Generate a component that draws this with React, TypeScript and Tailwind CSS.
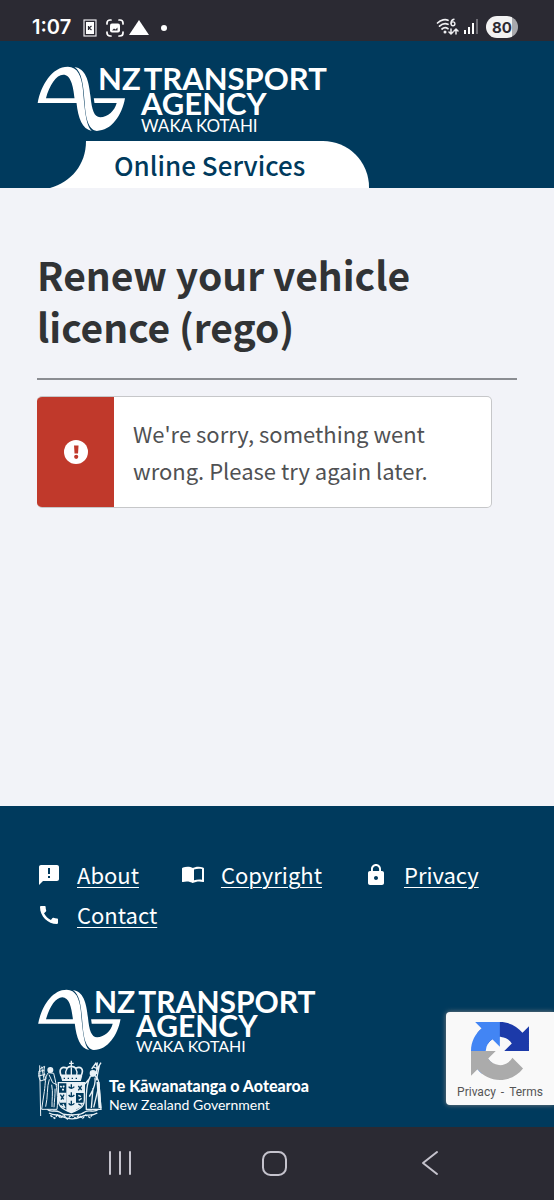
import type { ReactNode } from "react";
import { MdAnnouncement, MdCall, MdLock } from "react-icons/md";

const sans = "font-['Noto_Sans_CJK_SC','Noto_Sans',sans-serif]";

function StatusBar() {
  return (
    <div className="flex items-end justify-between bg-[#2b2a33] pt-4 pr-9 pb-[3px] pl-8 text-white">
      <div className="flex items-center">
        <span className="w-[51px] font-['Inter',sans-serif] text-[20px] leading-[21px] font-semibold">1:07</span>
        <svg className="mr-2 h-[18px] w-[14px]" viewBox="0 0 14 18" aria-hidden="true">
          <rect x="1" y="1" width="12" height="16" fill="none" stroke="#e8e8ec" strokeWidth="1.2" />
          <rect x="3" y="3" width="8" height="12" fill="#fff" />
          <path d="M5.500 7v4M8.500 7L6 9l2.500 2" fill="none" stroke="#2b2a33" strokeWidth="1.2" />
        </svg>
        <svg className="mr-1 h-[18px] w-5" viewBox="0 0 20 18" fill="none" stroke="#fff" strokeWidth="1.7" strokeLinecap="round" aria-hidden="true">
          <path d="M2 5V4a3 3 0 013-3h1M14 1h1a3 3 0 013 3v1M18 13v1a3 3 0 01-3 3h-1M6 17H5a3 3 0 01-3-3v-1" />
          <rect x="5" y="4.500" width="10" height="9" rx="2" fill="#fff" stroke="none" />
          <path d="M7 11.500l2-2 1.500 1 2-2v3z" fill="#2b2a33" stroke="none" />
        </svg>
        <svg className="mr-3 h-[15px] w-5" viewBox="0 0 20 15" fill="#fff" aria-hidden="true"><path d="M10 0l10 15H0z" /></svg>
        <span className="size-[6px] rounded-full bg-white" />
      </div>
      <div className="flex items-center">
        <svg className="mr-1 h-[18px] w-[23px]" viewBox="0 0 23 18" fill="none" stroke="#f0f0f3" strokeWidth="1.7" strokeLinecap="round" aria-hidden="true">
          <path d="M1.500 5C5 1.600 9.500 1 12 2.300M3.500 8.200C6.500 5.400 9.500 5 12 6.300M6 11c2-1.800 4-1.800 6-.3" />
          <circle cx="9" cy="14" r="1.500" fill="#f0f0f3" stroke="none" />
          <path d="M18 1.200c-2 .5-3 2-3 4" strokeWidth="1.400" />
          <circle cx="17" cy="5.800" r="1.900" strokeWidth="1.400" />
          <path d="M15 11v5m-2-2l2 2 2-2M20 16v-5m-2 2l2-2 2 2" strokeWidth="1.500" />
        </svg>
        <svg className="mr-2 h-4 w-[15px]" viewBox="0 0 15 16" strokeWidth="2" aria-hidden="true">
          <path d="M2 15v-4M6 15V8M10 15V4" stroke="#fff" />
          <path d="M14 15V0" stroke="#6e6d75" />
        </svg>
        <span className="flex h-[22px] w-8 items-center justify-center rounded-full bg-linear-to-r from-[#f2f2f3] from-80% to-[#a8a8ad] to-80% font-['Inter',sans-serif] text-[15px] leading-none font-bold text-[#2b2a33]">
          80
        </span>
      </div>
    </div>
  );
}

function WaveMark({ className }: { className: string }) {
  return (
    <svg className={className} viewBox="50 34 268 198" fill="#fff" aria-hidden="true">
      <path
        fillRule="evenodd"
        d="M52 145C62 92 95 36 143 36C172 36 184 64 188 102C193 152 196 214 215 229C186 224 174 190 169 145ZM77 131H163C159 92 151 60 129 60C108 60 87 92 77 131Z"
      />
      <path d="M163 37C196 42 206 76 211 125C215 166 222 188 240 188C264 188 284 168 290 145H223L221 131H315C306 182 274 229 230 229C202 225 196 184 193 138C189 92 186 52 163 37Z" />
    </svg>
  );
}

function Crest() {
  return (
    <svg className="h-[60px] w-[66px] shrink-0" viewBox="20 18 198 180" fill="none" stroke="#e9f1f6" strokeWidth="4" aria-hidden="true">
      <path d="M92 64C84 44 96 36 110 43C116 35 130 35 136 43C150 36 162 44 153 64Z" strokeWidth="5" />
      <path d="M110 43c-4 7-5 14-3 20M136 43c4 7 5 14 3 20M123 40v24M123 20v18M116 28h14" />
      <path d="M94 68h59l-3 11H97z" fill="#e9f1f6" />
      <path d="M100 73h4m8 0h4m8 0h4m8 0h4" stroke="#003a5d" />
      <path d="M84 86h78v52c0 22-18 30-39 38c-21-8-39-16-39-38z" />
      <path d="M108 87h29v83l-14 6-15-6z" fill="#e9f1f6" stroke="none" />
      <path d="M84 116h24v30H88l-4-10z" fill="#e9f1f6" stroke="none" />
      <path d="M137 87h24v30h-24zM137 146h22l-8 14-14 7z" fill="#e9f1f6" stroke="none" />
      <path d="M115 98c5 7 12 6 17 0M123 91v13M115 123c5 7 12 6 17 0M123 115v14M115 148c5 7 12 6 17 0M123 140v14" stroke="#003a5d" />
      <path d="M90 96l4 4M99 95l2 5M95 107h6" strokeWidth="5" />
      <path d="M144 96l10 12M154 95l-10 14M90 122l10 14M101 122l-9 15M144 150l8 4" stroke="#003a5d" />
      <path d="M144 124l8 4M154 133l-9 6M91 155l10 5M98 150l6 12" strokeWidth="4" />
      <circle cx="60" cy="48" r="7" fill="#e9f1f6" />
      <path d="M54 56C43 69 46 88 42 112L34 166H80C84 134 80 96 70 58ZM56 62l11 24 14 7M57 76c-8 22-4 54-11 82M64 92c5 25 0 46 1 67M74 104c1 18-2 36-3 56" strokeWidth="3" />
      <path d="M28 34l3 152M31 43c-8 11-8 25 0 38l16-6C41 62 39 48 43 37zM25 53l18-5M25 66l20-5M34 38l8 42" strokeWidth="3" />
      <circle cx="188" cy="58" r="8" fill="#e9f1f6" />
      <path d="M180 67C170 86 166 120 168 166H212L207 104C207 84 202 70 193 64ZM180 70l-16 20M194 71c4 26-10 43-17 57M188 102l-5 60M207 90l-17 70" />
      <path d="M203 84l6 78" strokeWidth="9" />
      <path d="M184 45l12-17 6 14 10-16M190 39l15 7M201 25l-3 35M207 35l-9 44" />
      <path d="M51 166C60 177 74 166 87 174C104 187 112 180 124 183C137 180 148 186 163 174C178 165 190 178 205 166M56 177c18 11 27 1 40 11c20 9 39 9 58 0c14-10 27 2 47-11" strokeWidth="4" />
      <path d="M60 184l13 9 8-10 11 9 8-9 11 12 12-12 14 10 9-9 11 9 9-10 13 8 7-9" strokeDasharray="8 3" strokeWidth="4" />
    </svg>
  );
}

function AgencyLogo() {
  return (
    <div className="flex items-start text-white">
      <WaveMark className="h-[66px] w-[89px]" />
      <div className="-ml-7 font-['Lato',sans-serif] font-bold">
        <div className="flex gap-[3px] text-[31px] leading-[25px]"><span>NZ</span><span>TRANSPORT</span></div>
        <div className="ml-[43px] text-[31px] leading-[25px]">AGENCY</div>
        <div className="ml-[43px] text-[17px] leading-[20px] font-normal">WAKA KOTAHI</div>
      </div>
    </div>
  );
}

function FooterAgencyLogo() {
  return (
    <div className="flex items-start text-white">
      <WaveMark className="h-[62px] w-[85px]" />
      <div className="-ml-7 font-['Lato',sans-serif] font-bold">
        <div className="flex gap-[3px] text-[30px] leading-[24px]"><span>NZ</span><span>TRANSPORT</span></div>
        <div className="ml-[42px] text-[30px] leading-[24px]">AGENCY</div>
        <div className="ml-[42px] text-[16px] leading-[17px] font-normal">WAKA KOTAHI</div>
      </div>
    </div>
  );
}

function OpenBook() {
  return (
    <svg className="size-6" viewBox="0 0 24 24" fill="currentColor" aria-hidden="true">
      <path d="M12 5C9 3.500 5 3.500 2 4.500C1.400 4.700 1 5 1 5.500V18.500C1 19 1.500 19.200 2 19C5 18 9 18.300 12 20Z" />
      <path fillRule="evenodd" d="M11 5.500C14 3.500 19 3.500 22 4.500C22.600 4.700 23 5 23 5.500V18.500C23 19 22.500 19.200 22 19C19 18 15 18.300 11.500 20ZM13 6.500V17.300C15.500 16.500 18.500 16.300 21 16.800V6C18.500 5.400 15.500 5.500 13 6.500Z" />
    </svg>
  );
}

function FooterLink({ icon, children }: { icon: ReactNode; children: string }) {
  return (
    <li className="flex items-center gap-4">
      <span className="pt-[2px] text-2xl">{icon}</span>
      <a href="#" className="underline decoration-1 underline-offset-3">{children}</a>
    </li>
  );
}

function Recaptcha() {
  return (
    <aside className="absolute right-0 bottom-[22px] flex w-[108px] flex-col items-center rounded-l-[4px] bg-[#f9f9f9] pt-[10px] pb-px shadow-[0_0_5px_#808080]">
      <svg className="size-[58px]" viewBox="0 0 64 64" aria-hidden="true">
        <path fill="#1c3aa9" d="M64 31.955l-.033-1.370V4.687l-7.160 7.160C50.948 4.674 42.033.093 32.050.093c-10.400 0-19.622 4.960-25.458 12.640l11.736 11.860a15.550 15.550 0 0 1 4.754-5.334c2.050-1.600 4.952-2.906 8.968-2.906.485 0 .860.057 1.135.163 4.976.393 9.288 3.140 11.828 7.124l-8.307 8.307L64 31.953" />
        <path fill="#4285f4" d="M31.862.094l-1.370.033H4.594l7.160 7.160C4.580 13.147 0 22.060 0 32.046c0 10.400 4.960 19.622 12.640 25.458L24.500 45.768a15.550 15.550 0 0 1-5.334-4.754c-1.600-2.050-2.906-4.952-2.906-8.968 0-.485.057-.860.163-1.135.393-4.976 3.140-9.288 7.124-11.828l8.307 8.307L31.860.095" />
        <path fill="#ababab" d="M.001 32.045l.033 1.370v25.898l7.160-7.160c5.860 7.173 14.774 11.754 24.757 11.754 10.400 0 19.622-4.960 25.458-12.640l-11.736-11.860a15.550 15.550 0 0 1-4.754 5.334c-2.050 1.600-4.952 2.906-8.968 2.906-.485 0-.860-.057-1.135-.163-4.976-.393-9.288-3.140-11.828-7.124l8.307-8.307c-10.522.040-22.400.066-27.295-.005" />
      </svg>
      <div className="flex gap-[5px] font-['Roboto',sans-serif] text-[12px] leading-6 text-[#555]">
        <a href="#">Privacy</a><span>-</span><a href="#">Terms</a>
      </div>
    </aside>
  );
}

function SystemNav() {
  return (
    <nav className="flex h-[73px] items-center justify-around bg-[#2b2a33] pr-[46px] pb-px pl-[42px] text-[#c5c3cd]" aria-label="System">
      <button type="button" aria-label="Recent apps">
        <svg className="size-7" viewBox="0 0 28 28" fill="none" stroke="currentColor" strokeWidth="2" strokeLinecap="round"><path d="M4 3v22M14 3v22M24 3v22" /></svg>
      </button>
      <button type="button" aria-label="Home">
        <svg className="size-7" viewBox="0 0 28 28" fill="none" stroke="currentColor" strokeWidth="2"><rect x="2" y="3" width="23" height="23" rx="7.500" /></svg>
      </button>
      <button type="button" aria-label="Back">
        <svg className="size-7" viewBox="0 0 28 28" fill="none" stroke="currentColor" strokeWidth="2" strokeLinecap="round" strokeLinejoin="round"><path d="M21 3L7 14l14 11" /></svg>
      </button>
    </nav>
  );
}

export default function App() {
  return (
    <div className={`flex min-h-screen flex-col bg-[#f2f3f8] ${sans}`}>
      <StatusBar />
      <header className="bg-[#003a5d] pt-[25px]">
        <div className="px-[37px]"><AgencyLogo /></div>
        <div className="mt-[5px] flex pl-[50px]">
          <svg className="h-[47px] w-9" viewBox="0 0 36 47" fill="#fff" aria-hidden="true"><path d="M36 0C36 24 21 41 0 47H36Z" /></svg>
          <div className="flex h-[47px] items-center rounded-tr-[46px] bg-white pr-16 pl-7 text-[26px] leading-8 font-medium text-[#003a5d]">
            Online Services
          </div>
        </div>
      </header>
      <main className="flex-1 px-[37px] pt-[60px]">
        <h1 className="border-b-2 border-[#8b8d92] pb-[26px] text-[39px] leading-[52px] font-bold text-[#313335]">
          Renew your vehicle licence (rego)
        </h1>
        <div role="alert" className="mt-4 mr-[25px] flex overflow-hidden rounded-[5px] border border-l-0 border-[#c6c7c9] bg-white">
          <div className="flex w-[77px] shrink-0 items-center justify-center bg-[#c0392b]">
            <svg className="size-6" viewBox="0 0 24 24" aria-hidden="true">
              <circle cx="12" cy="12" r="12" fill="#fff" />
              <path d="M10 5.500h4.500l-.5 8h-3.500z" fill="#c0392b" /><circle cx="12.200" cy="16.800" r="2.100" fill="#c0392b" />
            </svg>
          </div>
          <p className="px-[19px] py-[18px] text-[22px] leading-[37px] text-[#505153]">
            We're sorry, something went wrong. Please try again later.
          </p>
        </div>
      </main>
      <footer className="relative bg-[#003a5d] px-[37px] pt-[48px] pb-[7px] text-white">
        <ul className="flex flex-wrap gap-x-[42px] text-[22px] leading-10">
          <FooterLink icon={<MdAnnouncement />}>About</FooterLink>
          <FooterLink icon={<OpenBook />}>Copyright</FooterLink>
          <FooterLink icon={<MdLock />}>Privacy</FooterLink>
          <FooterLink icon={<MdCall />}>Contact</FooterLink>
        </ul>
        <div className="mt-[55px]"><FooterAgencyLogo /></div>
        <div className="mt-[6px] flex items-center gap-[6px]">
          <Crest />
          <div className="pt-[10px] font-['Lato',sans-serif] leading-[19px]">
            <div className="text-[16px] font-black">Te Kāwanatanga o Aotearoa</div>
            <div className="text-[14px]">New Zealand Government</div>
          </div>
        </div>
        <Recaptcha />
      </footer>
      <SystemNav />
    </div>
  );
}
